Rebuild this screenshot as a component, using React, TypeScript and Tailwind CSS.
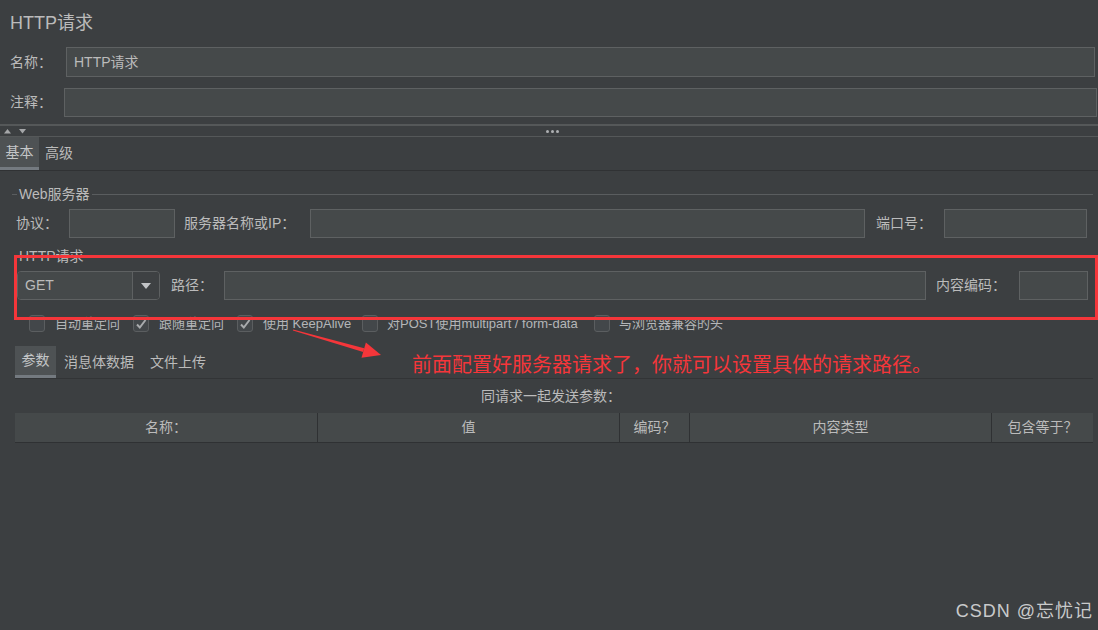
import React from 'react'

const font = { fontFamily: '"Liberation Sans", "Noto Sans CJK SC", sans-serif' }

function Input({ className = '', children }: { className?: string; children?: React.ReactNode }) {
  return (
    <div className={`h-full bg-[#45494a] border border-[#5e6162] flex items-center px-[7px] text-[14px] text-[#bbbbbb] ${className}`}>
      {children}
    </div>
  )
}

function Check({ checked, label, w, gap = 'gap-[10px]' }: { checked?: boolean; label: React.ReactNode; w: string; gap?: string }) {
  return (
    <div className={`flex items-center ${gap} ${w}`}>
      <div className="w-[16px] h-[17px] shrink-0 rounded-[3px] border border-[#5b5e60] bg-[#43474a] flex items-center justify-center">
        {checked && (
          <svg width="12" height="12" viewBox="0 0 12 12">
            <path d="M2 6.5l2.8 3L10.5 2" fill="none" stroke="#a9abad" strokeWidth={2} />
          </svg>
        )}
      </div>
      <span className="text-[13px] whitespace-nowrap text-[#b4b6b8]">{label}</span>
    </div>
  )
}

export default function App() {
  return (
    <div style={font} className="relative w-[1098px] h-[630px] overflow-hidden bg-[#3c3f41] text-[#bbbbbb]">
      {/* title */}
      <div className="h-[47px] flex items-center pl-[10px] text-[18px] text-[#bbbbbb]">HTTP请求</div>

      {/* name */}
      <div className="h-[30px] flex items-center">
        <span className="w-[66px] pl-[10px] text-[14px]">名称：</span>
        <Input className="flex-1 mr-[3px]">HTTP请求</Input>
      </div>

      {/* comment */}
      <div className="mt-[11px] h-[29px] flex items-center">
        <span className="w-[64px] pl-[10px] text-[14px]">注释：</span>
        <Input className="flex-1 mr-[1px]" />
      </div>

      {/* splitter */}
      <div className="mt-[7px] h-[2px] bg-[#555859]" />
      <div className="h-[10px] flex items-center">
        <svg width="30" height="10" viewBox="0 0 30 10" className="ml-[2px]">
          <path d="M2 7.5L5.5 3L9 7.5Z" fill="#a5a7a9" />
          <path d="M17 3L24 3L20.5 7.5Z" fill="#a5a7a9" />
        </svg>
        <div className="ml-[514px] flex gap-[2px]">
          <div className="w-[3px] h-[3px] rounded-full bg-[#aeb0b2]" />
          <div className="w-[3px] h-[3px] rounded-full bg-[#aeb0b2]" />
          <div className="w-[3px] h-[3px] rounded-full bg-[#aeb0b2]" />
        </div>
      </div>
      <div className="h-px bg-[#555859]" />

      {/* main tabs */}
      <div className="h-[33px] flex items-stretch text-[14px]">
        <div className="w-[39px] bg-[#4e5254] border-b-[3px] border-[#747a80] flex items-center justify-center text-[#c4c6c8]">基本</div>
        <div className="ml-[6px] flex items-center">高级</div>
      </div>
      <div className="h-px bg-[#303234]" />

      {/* Web server group */}
      <div className="mt-[15px] h-[16px] flex items-center">
        <div className="ml-[12px] w-[5px] h-px bg-[#5a5d5f]" />
        <span className="px-[2px] text-[14px]">Web服务器</span>
        <div className="flex-1 h-px bg-[#5a5d5f] mr-[5px]" />
      </div>
      <div className="mt-[7px] h-[29px] flex items-center pl-[16px] pr-[11px] text-[14px]">
        <span className="w-[53px]">协议：</span>
        <Input className="w-[106px]" />
        <span className="ml-[9px] w-[126px] whitespace-nowrap">服务器名称或IP：</span>
        <Input className="flex-1" />
        <span className="ml-[11px] w-[68px]">端口号：</span>
        <Input className="w-[143px]" />
      </div>

      {/* HTTP request group */}
      <div className="mt-[10px] h-[16px] flex items-center pl-[19px] text-[14px]">HTTP请求</div>
      <div className="mt-[7px] h-[29px] flex items-center pl-[17px] pr-[10px] text-[14px]">
        <div className="w-[143px] h-full flex rounded-[4px] border border-[#5e6162] overflow-hidden">
          <div className="w-[114px] bg-[#45494a] flex items-center pl-[7px] text-[14px]">GET</div>
          <div className="flex-1 border-l border-[#5e6162] bg-[#3e4143] flex items-center justify-center">
            <svg width="10" height="6" viewBox="0 0 10 6">
              <path d="M0 0H10L5 6Z" fill="#c2c4c6" />
            </svg>
          </div>
        </div>
        <span className="ml-[11px] w-[53px]">路径：</span>
        <Input className="flex-1" />
        <span className="ml-[10px] w-[83px]">内容编码：</span>
        <Input className="w-[69px]" />
      </div>

      {/* checkboxes */}
      <div className="mt-[15px] h-[17px] flex items-center pl-[29px]">
        <Check w="w-[104px]" label="自动重定向" />
        <Check w="w-[104px]" checked label="跟随重定向" />
        <Check w="w-[125px]" checked label="使用 KeepAlive" />
        <Check w="w-[232px]" gap="gap-[9px]" label="对POST使用multipart / form-data" />
        <Check w="w-[200px]" gap="gap-[9px]" label="与浏览器兼容的头" />
      </div>

      {/* sub tabs */}
      <div className="mt-[14px] h-[32px] flex items-stretch ml-[15px] text-[14px]">
        <div className="w-[41px] bg-[#4e5254] border-b-[3px] border-[#747a80] flex items-center justify-center text-[#c4c6c8]">参数</div>
        <div className="ml-[8px] flex items-center">消息体数据</div>
        <div className="ml-[16px] flex items-center">文件上传</div>
      </div>
      <div className="h-px bg-[#323436] ml-[15px] mr-[5px]" />

      <div className="mt-[8px] h-[18px] flex items-center justify-center pl-[4px] text-[14px]">同请求一起发送参数：</div>

      {/* table header */}
      <div className="mt-[8px] h-[30px] ml-[15px] mr-[5px] grid grid-cols-[302px_301px_69px_301px_1fr] gap-x-[1px] bg-[#2f3133] border-b border-[#2f3133] text-[14px]">
        <div className="bg-[#45494a] flex items-center justify-center">名称：</div>
        <div className="bg-[#45494a] flex items-center justify-center">值</div>
        <div className="bg-[#45494a] flex items-center justify-center">编码？</div>
        <div className="bg-[#45494a] flex items-center justify-center">内容类型</div>
        <div className="bg-[#45494a] flex items-center justify-center">包含等于？</div>
      </div>

      {/* annotation overlays */}
      <div className="absolute left-[14px] top-[255px] w-[1084px] h-[65px] border-[3px] border-[#f5363a] pointer-events-none" />
      <svg className="absolute left-[290px] top-[325px]" width="100" height="40" viewBox="0 0 100 40">
        <path d="M3.1 4.5L74.2 23.2L73.2 27L2.9 5.5Z" fill="#f5363a" />
        <path d="M75.9 17.4L91 30L71.5 32.8Z" fill="#f5363a" />
      </svg>
      <div className="absolute left-[412px] top-[351px] text-[20px] leading-[26px] text-[#f5363a] whitespace-nowrap" style={{ fontFamily: '"Noto Sans CJK SC", sans-serif' }}>
        前面配置好服务器请求了，你就可以设置具体的请求路径。
      </div>

      <div className="absolute right-[5px] top-[598px] text-[18px] leading-[26px] tracking-[1px] text-[#c9cacb] whitespace-nowrap">CSDN @忘忧记</div>
    </div>
  )
}
